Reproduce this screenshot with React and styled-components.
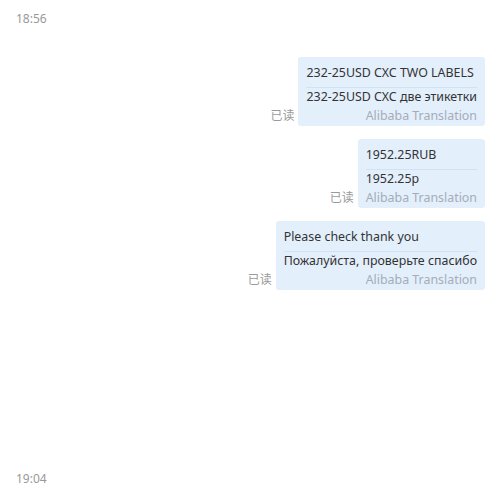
import React from "react";
import styled, { createGlobalStyle } from "styled-components";

const Global = createGlobalStyle`
  html, body {
    margin: 0;
    padding: 0;
    background: #ffffff;
  }
  body {
    font-family: "Noto Sans", "Noto Sans CJK SC", sans-serif;
  }
`;

const Page = styled.div`
  width: 500px;
  height: 500px;
  display: flex;
  flex-direction: column;
  box-sizing: border-box;
  padding: 10px 15px 0 16px;
`;

const Time = styled.div`
  font-size: 12px;
  line-height: 18px;
  color: #999999;
`;

const List = styled.div`
  display: flex;
  flex-direction: column;
  align-items: flex-end;
  gap: 13px;
  margin-top: 29px;
  flex: 1;
`;

const Row = styled.div`
  display: flex;
  align-items: flex-end;
  gap: 4px;
`;

const ReadMark = styled.span`
  font-size: 12px;
  line-height: 18px;
  color: #9a9a9a;
  margin-bottom: 2px;
  font-family: "Noto Sans CJK SC", sans-serif;
`;

const Bubble = styled.div`
  background: #e4effc;
  border-radius: 3px;
  padding: 7px 8px 1px 8px;
  display: flex;
  flex-direction: column;
  font-size: 12.4px;
  color: #333333;
`;

const Original = styled.div`
  line-height: 18px;
  padding-bottom: 5px;
  border-bottom: 1px solid #d2e1f3;
`;

const Translated = styled.div`
  line-height: 18px;
  white-space: nowrap;
`;

const Source = styled.div`
  line-height: 19px;
  color: #a3adb9;
  text-align: right;
  white-space: nowrap;
`;

const messages = [
  {
    original: "232-25USD CXC TWO LABELS",
    translated: "232-25USD CXC две этикетки",
  },
  { original: "1952.25RUB", translated: "1952.25р" },
  {
    original: "Please check thank you",
    translated: "Пожалуйста, проверьте спасибо",
  },
];

export default function App() {
  return (
    <Page>
      <Global />
      <Time>18:56</Time>
      <List>
        {messages.map((m, i) => (
          <Row key={i}>
            <ReadMark>已读</ReadMark>
            <Bubble>
              <Original>{m.original}</Original>
              <Translated>{m.translated}</Translated>
              <Source>Alibaba Translation</Source>
            </Bubble>
          </Row>
        ))}
      </List>
      <Time>19:04</Time>
      <div style={{ height: 12 }} />
    </Page>
  );
}
